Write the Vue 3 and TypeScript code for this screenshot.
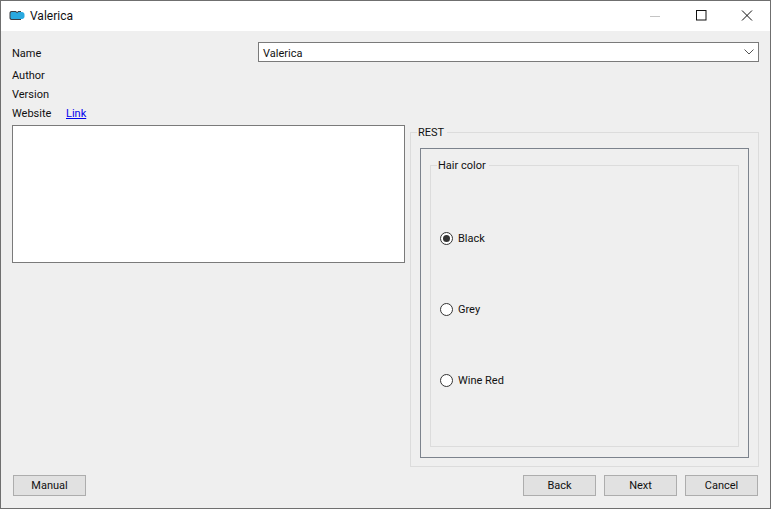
<script setup lang="ts">
const options: string[] = ['Black', 'Grey', 'Wine Red']
const meta: string[] = ['Author', 'Version']
</script>

<template>
  <div class="window">
    <header class="titlebar">
      <svg class="app-icon" width="16" height="12" viewBox="0 0 16 12">
        <path d="M2.500 1h4c.8 0 1.200.7 1.600 1.200.4-.5.800-1.200 1.600-1.200H12v9H2.500C1.400 10 .5 9.100.5 8V3c0-1.100.9-2 2-2z" fill="#3c4046" />
        <path d="M3 2h3.500c.8 0 1.200.8 1.600 1.300.4-.5.800-1.300 1.600-1.300H13c1.400 0 2.500 1.100 2.500 2.500v2c0 1.400-1.100 2.500-2.500 2.500H3c-.8 0-1.500-.7-1.500-1.500v-4C1.500 2.700 2.200 2 3 2z" fill="#29a9e0" />
      </svg>
      <span class="title">Valerica</span>
      <div class="controls">
        <span class="ctl">
          <svg width="12" height="12" viewBox="0 0 12 12"><path d="M1 6.500h10" stroke="#c4c4c4" stroke-width="1" /></svg>
        </span>
        <span class="ctl">
          <svg width="12" height="12" viewBox="0 0 12 12"><rect x="1.500" y=".5" width="9.500" height="9.500" fill="none" stroke="#111" stroke-width="1" /></svg>
        </span>
        <span class="ctl">
          <svg width="12" height="12" viewBox="0 0 12 12"><path d="M1 .500l10 10M11 .500l-10 10" fill="none" stroke="#111" stroke-width="1" /></svg>
        </span>
      </div>
    </header>

    <main class="body">
      <div class="name-row">
        <label class="name-label">Name</label>
        <div class="combo">
          <span class="combo-text">Valerica</span>
          <svg width="10" height="6" viewBox="0 0 10 6"><path d="M.5.500L5 5l4.500-4.500" fill="none" stroke="#555" stroke-width="1" /></svg>
        </div>
      </div>

      <div v-for="m in meta" :key="m" class="meta">{{ m }}</div>
      <div class="meta">
        <span class="meta-key">Website</span>
        <a class="link" href="#">Link</a>
      </div>

      <div class="content">
        <div class="description"></div>
        <fieldset class="rest">
          <legend>REST</legend>
          <div class="frame">
            <fieldset class="hair">
              <legend>Hair color</legend>
              <label v-for="(o, i) in options" :key="o" class="radio">
                <span class="dot" :class="{ on: i === 0 }"></span>
                <span class="radio-text">{{ o }}</span>
              </label>
            </fieldset>
          </div>
        </fieldset>
      </div>

      <footer class="footer">
        <button class="btn">Manual</button>
        <div class="nav">
          <button class="btn">Back</button>
          <button class="btn">Next</button>
          <button class="btn">Cancel</button>
        </div>
      </footer>
    </main>
  </div>
</template>

<style>
html, body { margin: 0; background: #efefef; }
</style>

<style scoped>
.window {
  width: 771px;
  height: 509px;
  box-sizing: border-box;
  border: 1px solid #6f6f6f;
  display: flex;
  flex-direction: column;
  background: #efefef;
  color: #111;
  font-family: Roboto, "Open Sans", sans-serif;
  font-size: 11px;
  line-height: 14px;
}
.titlebar {
  height: 30px;
  flex: none;
  background: #fff;
  display: flex;
  align-items: center;
  padding-left: 8px;
}
.app-icon { margin-right: 5px; }
.title { font-size: 12px; }
.controls { margin-left: auto; display: flex; }
.ctl {
  width: 46px;
  height: 30px;
  display: flex;
  align-items: center;
  justify-content: center;
}
.body {
  flex: 1;
  min-height: 0;
  display: flex;
  flex-direction: column;
  padding: 11px 11px 12px 11px;
}
.name-row { display: flex; align-items: center; height: 20px; margin-bottom: 3px; }
.name-label { width: 246px; flex: none; padding-top: 4px; }
.combo {
  flex: 1;
  height: 20px;
  box-sizing: border-box;
  border: 1px solid #7a7a7a;
  background: #fff;
  display: flex;
  align-items: center;
  justify-content: space-between;
  padding: 0 4px 0 4px;
}
.combo-text { padding-top: 4px; }
.meta { height: 19px; box-sizing: border-box; padding-top: 2px; display: flex; align-items: center; }
.meta-key { width: 54px; }
.link { color: #0000ee; text-decoration: underline; }
.content {
  flex: 1;
  min-height: 0;
  display: flex;
  gap: 5px;
  margin-top: 3px;
  align-items: flex-start;
}
.description {
  width: 393px;
  height: 138px;
  flex: none;
  box-sizing: border-box;
  border: 1px solid #7a7a7a;
  background: #fff;
}
fieldset {
  margin: 0;
  min-width: 0;
  box-sizing: border-box;
  border: 1px solid #dcdcdc;
}
legend {
  padding: 0 3px 0 1px;
  margin-left: -3px;
  height: 14px;
  line-height: 16px;
}
.rest {
  flex: 1;
  align-self: stretch;
  margin-bottom: 8px;
  padding: 9px 9px 8px;
  display: flex;
  flex-direction: column;
}
.frame {
  flex: 1;
  box-sizing: border-box;
  border: 1px solid #7c838d;
  padding: 9px 9px 10px;
  display: flex;
  flex-direction: column;
}
.hair {
  flex: 1;
  padding: 30px 0 30px 9px;
  display: flex;
  flex-direction: column;
  justify-content: center;
}
.radio { height: 71px; display: flex; align-items: center; gap: 5px; }
.radio-text { padding-top: 2px; }
.dot {
  width: 13px;
  height: 13px;
  box-sizing: border-box;
  border: 1px solid #333;
  border-radius: 50%;
  background: #fff;
  position: relative;
}
.dot.on::after {
  content: "";
  position: absolute;
  inset: 2px;
  border-radius: 50%;
  background: #333;
}
.footer { flex: none; display: flex; justify-content: space-between; padding: 0 1px; }
.nav { display: flex; gap: 8px; }
.btn {
  width: 73px;
  height: 21px;
  box-sizing: border-box;
  border: 1px solid #adadad;
  background: #e1e1e1;
  color: #111;
  font: inherit;
  padding: 0;
}
</style>
